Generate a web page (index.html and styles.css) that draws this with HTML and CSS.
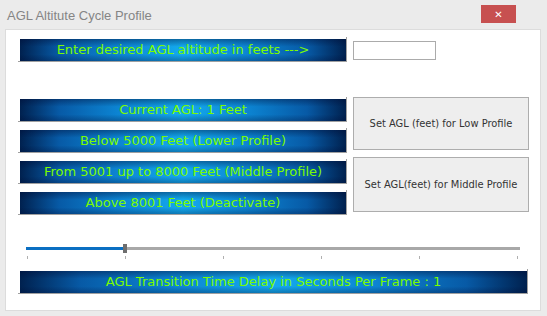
FILE: index.html
```html
<!DOCTYPE html>
<html lang="en">
<head>
    <meta charset="UTF-8">
    <title>AGL Altitute Cycle Profile</title>
    <link rel="stylesheet" href="styles.css">
</head>
<body>
    <div class="titlebar">
        <span class="title">AGL Altitute Cycle Profile</span>
        <button class="close" type="button">&#x2715;</button>
    </div>

    <div class="panel">
        <div class="row-top">
            <div class="lbl-wrap"><div class="lbl">Enter desired AGL altitude in feets ---&gt;</div></div>
            <input type="text" class="agl-input">
        </div>

        <div class="profiles">
            <div class="lbl-list">
                <div class="lbl-wrap"><div class="lbl">Current AGL: 1 Feet</div></div>
                <div class="lbl-wrap"><div class="lbl">Below 5000 Feet (Lower Profile)</div></div>
                <div class="lbl-wrap"><div class="lbl">From 5001 up to 8000 Feet (Middle Profile)</div></div>
                <div class="lbl-wrap"><div class="lbl">Above 8001 Feet (Deactivate)</div></div>
            </div>
            <div class="btn-list">
                <button class="btn btn-low" type="button">Set AGL (feet) for Low Profile</button>
                <button class="btn btn-mid" type="button">Set AGL(feet) for Middle Profile</button>
            </div>
        </div>

        <div class="slider">
            <div class="track">
                <div class="fill"></div>
                <div class="thumb"></div>
                <div class="rest"></div>
            </div>
            <div class="ticks">
                <span></span><span></span><span></span><span></span><span></span><span></span>
            </div>
        </div>

        <div class="lbl-wrap wide"><div class="lbl">AGL Transition Time Delay in Seconds Per Frame : 1</div></div>
    </div>
</body>
</html>
```

FILE: styles.css
```css
body {
    margin: 0;
    background-color: #ebebeb;
    font-family: "DejaVu Sans", sans-serif;
    width: 547px;
    height: 316px;
    overflow: hidden;
}

.titlebar {
    height: 29px;
    display: flex;
    align-items: flex-start;
    justify-content: space-between;
}

.title {
    margin: 8px 0 0 7px;
    font-family: "Liberation Sans", Arial, sans-serif;
    font-size: 13px;
    color: #858585;
}

.close {
    margin: 5px 31px 0 0;
    width: 35px;
    height: 18px;
    border: none;
    padding: 0;
    background-color: #c75050;
    color: #fff;
    font-size: 10px;
    font-weight: bold;
    font-family: "DejaVu Sans", sans-serif;
}

.panel {
    margin: 0 6px 0 5px;
    height: 282px;
    box-sizing: border-box;
    background-color: #fff;
    border: 1px solid #dcdcdc;
    padding: 7px 0 0 12px;
}

.row-top {
    display: flex;
    align-items: flex-start;
}

.lbl-wrap {
    width: 326px;
    padding: 2px 0 0 2px;
    border-right: 1px solid #a0a0a0;
    border-bottom: 1px solid #a0a0a0;
}

.lbl {
    height: 22px;
    line-height: 22px;
    text-align: center;
    font-size: 13px;
    color: #7cfc00;
    white-space: nowrap;
    background:
        linear-gradient(to bottom, rgba(0, 10, 50, 0.4), rgba(0, 10, 50, 0) 35%, rgba(0, 10, 50, 0) 70%, rgba(0, 10, 50, 0.3)),
        linear-gradient(to right, #00214f, #075aa6 12%, #0c84d2 30%, #14aaee 50%, #0c84d2 70%, #075aa6 88%, #00214f);
}

.agl-input {
    margin: 4px 0 0 6px;
    width: 83px;
    height: 19px;
    box-sizing: border-box;
    border: 1px solid #ababab;
    padding: 0;
}

.profiles {
    margin-top: 35px;
    display: flex;
    gap: 6px;
}

.lbl-list {
    display: flex;
    flex-direction: column;
    gap: 6px;
}

.btn-list {
    display: flex;
    flex-direction: column;
    gap: 7px;
}

.btn {
    width: 176px;
    box-sizing: border-box;
    border: 1px solid #adadad;
    background-color: #eeeeee;
    font-family: "DejaVu Sans Condensed", "DejaVu Sans", sans-serif;
    font-size: 11px;
    color: #333;
    padding: 0;
}

.btn-low {
    height: 53px;
}

.btn-mid {
    height: 55px;
}

.slider {
    margin: 29px 0 0 8px;
    width: 494px;
}

.track {
    position: relative;
    display: flex;
    align-items: center;
    height: 9px;
}

.fill {
    width: 97px;
    height: 3px;
    background-color: #0a6fc2;
}

.thumb {
    width: 4px;
    height: 9px;
    background-color: #6e6e6e;
}

.rest {
    flex: 1;
    height: 3px;
    background-color: #a8a8a8;
}

.ticks {
    margin: 3px 2px 0 1px;
    display: flex;
    justify-content: space-between;
}

.ticks span {
    width: 1px;
    height: 3px;
    background-color: #b0b0b0;
}

.lbl-wrap.wide {
    margin-top: 10px;
    width: 507px;
}
```
